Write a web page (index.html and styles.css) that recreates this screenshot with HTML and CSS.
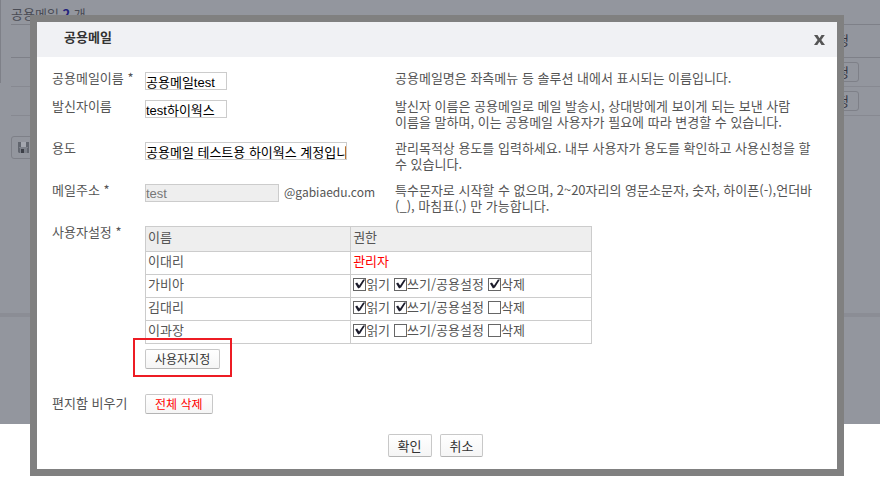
FILE: index.html
```html
<!DOCTYPE html>
<html lang="ko">
<head>
    <meta charset="UTF-8">
    <meta name="viewport" content="width=device-width, initial-scale=1.0">
    <title>공용메일</title>
    <link rel="stylesheet" href="styles.css">
</head>
<body>

<!-- 뒤쪽 목록 화면 -->
<div class="page" inert>
    <div class="page-list">
        <p class="count">공용메일 <b>2</b> 개</p>
        <table class="list-table">
            <thead>
                <tr><th></th><th class="col-set">설정</th></tr>
            </thead>
            <tbody>
                <tr><td></td><td class="col-set"><button type="button" class="btn-dim">설정</button></td></tr>
                <tr><td></td><td class="col-set"><button type="button" class="btn-dim">설정</button></td></tr>
            </tbody>
        </table>
        <button type="button" class="btn-save" aria-label="저장">
            <svg width="11" height="11" viewBox="0 0 11 11">
                <path d="M0 0h11v11H1L0 10z" fill="#62666f"/>
                <path d="M3 0h5v5H3z" fill="#a4a7af"/>
                <path d="M1 5h9v1H1z" fill="#7d818a"/>
                <path d="M2 6h7v5H2z" fill="#7d818a"/>
                <path d="M3 7h3v4H3z" fill="#3d4048"/>
            </svg>
        </button>
    </div>
    <div class="page-bottom"></div>
</div>

<div class="modal" role="dialog" aria-labelledby="modalTitle">
    <div class="modal-header">
        <h1 id="modalTitle">공용메일</h1>
        <button type="button" class="btn-close" aria-label="닫기">
            <svg width="11" height="10" viewBox="0 0 11 10">
                <path d="M0 0h3.500l2 3.200L7.500 0h3.300L7.300 4.900 11 10H7.500L5.400 6.700 3.300 10H0l3.600-5.100z" fill="#555"/>
            </svg>
        </button>
    </div>
    <form class="mail-form">
        <div class="row">
            <label for="mailName">공용메일이름 *</label>
            <div class="field"><input type="text" class="text short" id="mailName" value="공용메일test"></div>
            <p class="help">공용메일명은 좌측메뉴 등 솔루션 내에서 표시되는 이름입니다.</p>
        </div>
        <div class="row">
            <label for="senderName">발신자이름</label>
            <div class="field"><input type="text" class="text short" id="senderName" value="test하이웍스"></div>
            <p class="help">발신자 이름은 공용메일로 메일 발송시, 상대방에게 보이게 되는 보낸 사람<br>이름을 말하며, 이는 공용메일 사용자가 필요에 따라 변경할 수 있습니다.</p>
        </div>
        <div class="row">
            <label for="purpose">용도</label>
            <div class="field"><input type="text" class="text long" id="purpose" value="공용메일 테스트용 하이웍스 계정입니다"></div>
            <p class="help">관리목적상 용도를 입력하세요. 내부 사용자가 용도를 확인하고 사용신청을 할<br>수 있습니다.</p>
        </div>
        <div class="row">
            <label for="mailId">메일주소 *</label>
            <div class="field"><input type="text" class="text middle" id="mailId" value="test" disabled><span class="domain">@gabiaedu.com</span></div>
            <p class="help">특수문자로 시작할 수 없으며, 2~20자리의 영문소문자, 숫자, 하이픈(-),언더바<br>(_), 마침표(.) 만 가능합니다.</p>
        </div>
        <div class="row wide">
            <span class="title">사용자설정 *</span>
            <div class="users">
                <table class="user-table">
                    <thead>
                        <tr><th>이름</th><th>권한</th></tr>
                    </thead>
                    <tbody>
                        <tr>
                            <td>이대리</td>
                            <td class="admin">관리자</td>
                        </tr>
                        <tr>
                            <td>가비아</td>
                            <td><div class="perms">
                                <label><input type="checkbox" checked>읽기</label>
                                <label><input type="checkbox" checked>쓰기/공용설정</label>
                                <label><input type="checkbox" checked>삭제</label>
                            </div></td>
                        </tr>
                        <tr>
                            <td>김대리</td>
                            <td><div class="perms">
                                <label><input type="checkbox" checked>읽기</label>
                                <label><input type="checkbox" checked>쓰기/공용설정</label>
                                <label><input type="checkbox">삭제</label>
                            </div></td>
                        </tr>
                        <tr>
                            <td>이과장</td>
                            <td><div class="perms">
                                <label><input type="checkbox" checked>읽기</label>
                                <label><input type="checkbox">쓰기/공용설정</label>
                                <label><input type="checkbox">삭제</label>
                            </div></td>
                        </tr>
                    </tbody>
                </table>
                <div class="marked">
                    <button type="button" class="btn">사용자지정</button>
                </div>
            </div>
        </div>
        <div class="row wide empty-row">
            <span class="title">편지함 비우기</span>
            <div><button type="button" class="btn red">전체 삭제</button></div>
        </div>
        <div class="buttons">
            <button type="submit" class="btn big">확인</button>
            <button type="button" class="btn big">취소</button>
        </div>
    </form>
</div>

</body>
</html>
```

FILE: styles.css
```css
* {
    box-sizing: border-box;
}
body {
    margin: 0;
    font-family: "Noto Sans CJK KR", sans-serif;
    font-size: 13px;
    line-height: 16px;
    color: #555;
    background-color: white;
}
h1, p {
    margin: 0;
}
button, input {
    font-family: inherit;
    font-size: inherit;
    line-height: inherit;
    margin: 0;
}
table {
    border-collapse: collapse;
}

/* 뒤쪽 목록 화면 */
.page {
    position: absolute;
    top: 0;
    left: 0;
    right: 0;
    background-color: #93969e;
    color: #4a4c55;
}
.page-list {
    padding: 6px 0 154px 11px;
    background: linear-gradient(#7e8088, #7e8088) no-repeat left top / 1px 83px;
}
.count {
    height: 18px;
}
.count b {
    color: #22227c;
}
.list-table {
    width: 100%;
}
.list-table th, .list-table td {
    padding: 0;
    font-weight: normal;
    border-top: 1px solid #7e8088;
}
.list-table th {
    height: 33px;
    padding-bottom: 2px;
    color: #33353d;
}
.list-table td {
    height: 29px;
    border-color: #878991;
}
.list-table tr:last-child td {
    border-bottom: 1px solid #878991;
}
.list-table tbody tr:first-child td {
    border-top-color: #7e8088;
}
.col-set {
    width: 86px;
    text-align: center;
}
.btn-dim {
    display: block;
    margin: 0 auto;
    height: 20px;
    padding: 0 9px;
    line-height: 18px;
    border: 1px solid #7e8088;
    border-radius: 3px;
    background-color: #93969e;
    color: #33353d;
}
.btn-save {
    display: flex;
    align-items: center;
    width: 80px;
    height: 23px;
    margin-top: 20px;
    padding: 0 6px;
    border: 1px solid #7e8088;
    border-radius: 3px;
    background-color: #93969e;
}
.page-bottom {
    height: 111px;
    border-top: 4px solid #8b8d95;
}

/* 공용메일 설정 창 */
.modal {
    position: relative;
    margin: 15px 36px 13px 30px;
    border: 7px solid #808080;
    background-color: white;
}
.modal-header {
    display: flex;
    justify-content: space-between;
    align-items: center;
    height: 35px;
    padding: 0 12px 0 27px;
    background-color: #f0f1f4;
}
.modal-header h1 {
    font-size: 13px;
    line-height: 16px;
    padding-bottom: 5px;
    color: #333;
}
.btn-close {
    display: flex;
    padding: 0;
    border: none;
    background: none;
}
.mail-form {
    display: flex;
    flex-direction: column;
    gap: 8px;
    padding: 13px 18px 12px 15px;
}
.row {
    display: grid;
    grid-template-columns: 93px 250px 1fr;
    align-items: start;
}
.row.wide {
    grid-template-columns: 93px 1fr;
}
.field {
    display: flex;
    gap: 5px;
    padding-top: 2px;
}
.domain {
    font-size: 12px;
}
.help {
    padding-bottom: 2px;
    white-space: nowrap;
}
.text {
    height: 18px;
    padding: 0;
    border: 1px solid #ccc;
    background-color: white;
    color: #000;
    font-family: "Liberation Sans", "Noto Sans CJK KR", sans-serif;
}
.text:disabled {
    background-color: #eee;
    color: #777;
}
.short {
    width: 82px;
}
.middle {
    width: 134px;
}
.long {
    width: 202px;
}

.users {
    padding-top: 2px;
}
.user-table {
    width: 100%;
    max-width: 447px;
}
.user-table th, .user-table td {
    height: 23px;
    padding: 0 2px 4px;
    border: 1px solid #ccc;
    font-weight: normal;
    text-align: left;
}
.user-table th {
    height: 25px;
    background-color: #eee;
}
.user-table th:first-child {
    width: 46%;
}
.user-table .admin {
    color: #f00;
}
.perms {
    display: flex;
    gap: 4px;
}
.perms label {
    display: flex;
    align-items: center;
}
.perms input {
    appearance: none;
    width: 13px;
    height: 13px;
    border: 1px solid #666;
    background-color: white;
}
.perms input:checked::before {
    content: "";
    display: block;
    width: 11px;
    height: 11px;
    background-color: #1c1c2c;
    clip-path: polygon(1px 5px, 3px 4px, 5px 7px, 9px 1px, 11px 1px, 6px 9px, 4px 10px);
}

/* 강조 테두리 */
.marked {
    position: relative;
    padding-top: 5px;
}
.marked::after {
    content: "";
    box-sizing: border-box;
    position: absolute;
    left: -12px;
    top: -6px;
    width: 99px;
    height: 39px;
    border: 2px solid #ed1c24;
    pointer-events: none;
}
.btn {
    display: block;
    height: 20px;
    padding: 0 9px;
    line-height: 16px;
    border: 1px solid #c8c8c8;
    border-bottom-color: #b4b4b4;
    border-radius: 2px;
    background: linear-gradient(#fff, #f5f5f5);
    color: #333;
    font-size: 12px;
}
.btn.red {
    color: #f00;
}
.btn.big {
    height: 23px;
    line-height: 19px;
    font-size: 13px;
}
.empty-row {
    margin-top: 17px;
}
.empty-row .title {
    padding-top: 1px;
}
.buttons {
    display: flex;
    justify-content: center;
    gap: 8px;
    margin-top: 12px;
}
```
